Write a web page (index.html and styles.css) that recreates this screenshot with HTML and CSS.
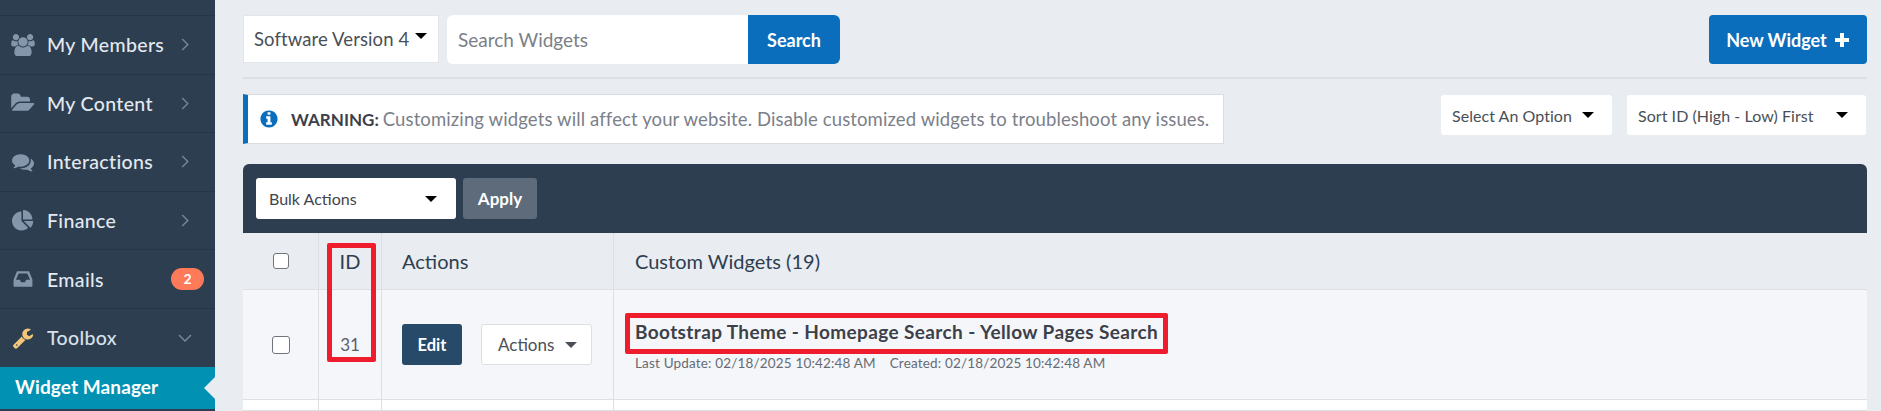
FILE: index.html
```html
<!DOCTYPE html>
<html lang="en">
<head>
<meta charset="utf-8">
<title>Widget Manager</title>
<link rel="stylesheet" href="styles.css">
</head>
<body>
<div class="app">
  <aside class="sidebar">
    <div class="side-top"></div>
    <a class="nav"><svg class="ico" viewBox="0 0 1920 1792"><path d="M593 896q-162 5-265 128h-134q-82 0-138-40.500t-56-118.500q0-353 124-353 6 0 43.500 21t97.500 42.500 119 21.500q67 0 133-23-5 37-5 66 0 139 81 256zm1071 637q0 120-73 189.500t-194 69.500h-874q-121 0-194-69.500t-73-189.500q0-53 3.500-103.500t14-109 26.500-108.500 43-97.500 62-81 85.500-53.500 111.500-20q10 0 43 21.500t73 48 107 48 135 21.500 135-21.500 107-48 73-48 43-21.500q61 0 111.500 20t85.500 53.500 62 81 43 97.500 26.500 108.500 14 109 3.500 103.500zm-1024-1277q0 106-75 181t-181 75-181-75-75-181 75-181 181-75 181 75 75 181zm704 384q0 159-112.500 271.500t-271.500 112.500-271.500-112.500-112.500-271.500 112.500-271.500 271.500-112.500 271.500 112.500 112.500 271.500zm576 225q0 78-56 118.500t-138 40.500h-134q-103-123-265-128 81-117 81-256 0-29-5-66 66 23 133 23 59 0 119-21.500t97.500-42.500 43.500-21q124 0 124 353zm-128-609q0 106-75 181t-181 75-181-75-75-181 75-181 181-75 181 75 75 181z"/></svg><span class="label">My Members</span><svg class="chev" viewBox="0 0 8 14"><path d="M1 1l6 6-6 6"/></svg></a>
    <a class="nav"><svg class="ico" viewBox="0 0 1920 1792"><path d="M1879 952q0 31-31 66l-336 396q-43 51-120.500 86.500t-143.500 35.500h-1088q-34 0-60.500-13t-26.500-43q0-31 31-66l336-396q43-51 120.500-86.500t143.500-35.500h1088q34 0 60.500 13t26.500 43zm-343-344v160h-832q-94 0-197 47.500t-164 119.500l-337 396-5 6q0-4-.5-12.500t-.5-12.500v-960q0-92 66-158t158-66h320q92 0 158 66t66 158v32h544q92 0 158 66t66 158z"/></svg><span class="label">My Content</span><svg class="chev" viewBox="0 0 8 14"><path d="M1 1l6 6-6 6"/></svg></a>
    <a class="nav"><svg class="ico" viewBox="0 0 1792 1792"><path d="M1408 768q0 139-94 257t-256.500 186.500-353.500 68.500q-86 0-176-16-124 88-278 128-36 9-86 16h-3q-11 0-20.500-8t-11.500-21q-1-3-1-6.500t.5-6.500 2-6l2.500-5 3.500-5.500 4-5 4.500-5 4-4.500q5-6 23-25t26-29.500 22.500-29 25-38.500 20.500-44q-124-72-195-177t-71-224q0-139 94-257t256.500-186.500 353.500-68.500 353.500 68.500 256.500 186.500 94 257zm384 256q0 120-71 224.500t-195 176.500q10 24 20.500 44t25 38.500 22.500 29 26 29.500 23 25q1 1 4 4.500t4.500 5 4 5 3.500 5.500l2.500 5 2 6 .5 6.500-1 6.500q-3 14-13 22t-22 7q-50-7-86-16-154-40-278-128-90 16-176 16-271 0-472-132 58 4 88 4 161 0 309-45t264-129q125-92 192-212t67-254q0-77-23-152 129 71 204 178t75 230z"/></svg><span class="label">Interactions</span><svg class="chev" viewBox="0 0 8 14"><path d="M1 1l6 6-6 6"/></svg></a>
    <a class="nav"><svg class="ico" viewBox="0 0 1792 1792"><path d="M768 890l546 546q-106 108-247.500 168t-298.500 60q-209 0-385.500-103t-279.500-279.500-103-385.500 103-385.500 279.500-279.500 385.500-103v762zm187 6h773q0 157-60 298.500t-168 247.500zm709-128h-768v-768q209 0 385.500 103t279.500 279.500 103 385.500z"/></svg><span class="label">Finance</span><svg class="chev" viewBox="0 0 8 14"><path d="M1 1l6 6-6 6"/></svg></a>
    <a class="nav"><svg class="ico" viewBox="0 0 1536 1792"><path d="M1023 960h316q-1-3-2.500-8.500t-2.500-7.500l-212-496h-708l-212 496q-1 3-2.500 8.500t-2.500 7.500h316l95 192h320zm513 30v482q0 26-19 45t-45 19h-1408q-26 0-45-19t-19-45v-482q0-62 25-123l238-552q10-25 36.500-42t52.500-17h832q26 0 52.500 17t36.500 42l238 552q25 61 25 123z"/></svg><span class="label">Emails</span><span class="badge">2</span></a>
    <a class="nav nav-open"><svg class="ico ico-wrench" viewBox="0 0 1792 1792"><path d="M448 1472q0-26-19-45t-45-19-45 19-19 45 19 45 45 19 45-19 19-45zm644-420l-682 682q-37 37-90 37-52 0-91-37l-106-108q-38-36-38-90 0-53 38-91l681-681q39 98 114.500 173.500t173.500 114.500zm634-435q0 39-23 106-47 134-164.500 217.500t-258.500 83.500q-185 0-316.500-131.500t-131.500-316.500 131.500-316.500 316.500-131.500q58 0 121.500 16.500t107.500 46.500q16 11 16 28t-16 28l-293 169v224l193 107q5-3 79-48.500t135.500-81 70.500-35.500q15 0 23.500 10t8.500 25z"/></svg><span class="label">Toolbox</span><svg class="chev chev-down" viewBox="0 0 14 8"><path d="M1 1l6 6 6-6"/></svg></a>
    <a class="nav-active">Widget Manager</a>
  </aside>

  <main class="main">
    <div class="top-row">
      <div class="version">Software Version 4<i class="caret caret-up"></i></div>
      <div class="search">
        <div class="search-input">Search Widgets</div>
        <button class="btn-blue btn-search">Search</button>
      </div>
      <button class="btn-blue btn-new">New Widget<svg class="plus" viewBox="0 0 16 16"><path d="M6 1h4v5h5v4h-5v5H6v-5H1V6h5z"/></svg></button>
    </div>
    <div class="notice-row">
      <div class="notice">
        <svg class="info" viewBox="0 0 1536 1792"><path d="M1024 1376v-160q0-14-9-23t-23-9h-96v-512q0-14-9-23t-23-9h-320q-14 0-23 9t-9 23v160q0 14 9 23t23 9h96v320h-96q-14 0-23 9t-9 23v160q0 14 9 23t23 9h448q14 0 23-9t9-23zm-128-896v-160q0-14-9-23t-23-9h-192q-14 0-23 9t-9 23v160q0 14 9 23t23 9h192q14 0 23-9t9-23zm640 416q0 209-103 385.500t-279.500 279.500-385.500 103-385.500-103-279.500-279.500-103-385.500 103-385.500 279.500-279.500 385.500-103 385.500 103 279.500 279.500 103 385.500z"/></svg>
        <b>WARNING:</b><span>Customizing widgets will affect your website. Disable customized widgets to troubleshoot any issues.</span>
      </div>
      <div class="pick pick-a">Select An Option<i class="caret"></i></div>
      <div class="pick pick-b">Sort ID (High - Low) First<i class="caret"></i></div>
    </div>

    <section class="panel">
      <div class="panel-bar">
        <div class="bulk">Bulk Actions<i class="caret"></i></div>
        <button class="apply">Apply</button>
      </div>
      <div class="grid grid-head">
        <div class="cell cell-c"><i class="check"></i></div>
        <div class="cell cell-c">ID</div>
        <div class="cell cell-a">Actions</div>
        <div class="cell cell-t">Custom Widgets (19)</div>
      </div>
      <div class="grid grid-row">
        <div class="cell cell-c"><i class="check check-lg"></i></div>
        <div class="cell cell-c cell-id">31</div>
        <div class="cell cell-a">
          <button class="edit">Edit</button>
          <div class="row-actions">Actions<i class="caret caret-grey"></i></div>
        </div>
        <div class="cell cell-t cell-stack">
          <div class="title">Bootstrap Theme - Homepage Search - Yellow Pages Search</div>
          <div class="meta"><span>Last Update: 02/18/2025 10:42:48 AM</span><span>Created: 02/18/2025 10:42:48 AM</span></div>
        </div>
      </div>
      <div class="grid grid-next">
        <div class="cell"></div><div class="cell"></div><div class="cell"></div><div class="cell"></div>
      </div>
    </section>

    <div class="mark mark-id"></div>
    <div class="mark mark-title"></div>
  </main>
</div>
</body>
</html>
```
FILE: styles.css
```css
* { box-sizing: border-box; }
html, body { margin: 0; height: 411px; overflow: hidden; }
body { font-family: "Lato", "Open Sans", sans-serif; color: #3c4450; background: #e9ecf1; }
.app { display: flex; height: 411px; }

.sidebar { width: 215px; flex: none; background: #2d3e50; overflow: hidden; }
.side-top { height: 16px; border-bottom: 1px solid #26354a; }
.nav { display: flex; align-items: center; height: 58.600px; padding: 0 26px 0 11px; border-bottom: 1px solid #26354a; color: #e3e9f0; font-size: 19.500px; font-weight: 500; letter-spacing: .35px; }
.nav-open { border-bottom: 0; height: 58px; color: #d7e0ea; }
.ico { width: 24px; height: 22px; fill: #8496a9; flex: none; }
.ico-wrench { fill: #f3c777; }
.label { margin-left: 12px; flex: 1; }
.chev { width: 8px; height: 13px; fill: none; stroke: #75879c; stroke-width: 1.5; }
.chev-down { width: 14px; height: 8px; margin-right: -3px; }
.badge { width: 33px; height: 22px; margin-right: -15px; border-radius: 11px; background: #ff7a59; color: #fff; font-size: 14px; font-weight: 700; text-align: center; line-height: 22px; letter-spacing: 0; }
.nav-active { position: relative; display: block; height: 42px; padding-left: 15px; background: #0091b3; color: #fff; font-size: 19px; font-weight: 700; line-height: 40px; letter-spacing: .1px; }
.nav-active::after { content: ""; position: absolute; right: 0; top: 10px; border: 11px solid transparent; border-left: 0; border-right-color: #e9ecf1; }

.main { position: relative; flex: 1; padding: 15px 14px 0 28px; min-width: 0; }
.top-row { display: flex; align-items: stretch; height: 64px; padding-bottom: 15px; border-bottom: 2px solid #dcdfe3; }
.version { display: flex; align-items: center; width: 196px; height: 48px; padding-left: 10px; background: #fff; border: 1px solid #e2e5ea; font-size: 18.500px; letter-spacing: .1px; color: #4a4f57; }
.caret { display: inline-block; width: 0; height: 0; border: 6px solid transparent; border-top-color: #000; border-bottom: 0; }
.caret-up { margin: 0 0 6px 6px; }
.search { display: flex; margin-left: 8px; height: 49px; }
.search-input { display: flex; align-items: center; width: 301px; padding-left: 11px; background: #fff; border-radius: 6px 0 0 6px; font-size: 19px; color: #7a7f87; }
.btn-blue { background: #0a6ebd; color: #fff; border: 0; font-family: inherit; font-size: 18px; font-weight: 700; }
.btn-search { width: 92px; border-radius: 0 6px 6px 0; }
.btn-new { display: flex; align-items: center; justify-content: center; gap: 7px; width: 158px; height: 49px; margin-left: auto; border-radius: 4px; }
.plus { width: 16px; height: 16px; fill: #fff; }

.notice-row { display: flex; align-items: flex-start; margin-top: 15px; height: 70px; }
.notice { display: flex; align-items: center; width: 981px; height: 50px; margin-right: auto; padding-left: 12px; background: #fff; border: 1px solid #d9dce1; border-left: 5px solid #0a6ebd; font-size: 18.500px; letter-spacing: .12px; color: #7b8089; white-space: nowrap; }
.notice b { margin: 0 4px 0 13px; color: #3c3f4a; font-size: 17px; font-weight: 700; letter-spacing: 0; }
.info { width: 18px; height: 20px; fill: #0a6ebd; flex: none; }
.pick { display: flex; align-items: center; justify-content: space-between; height: 40px; margin-top: 1px; padding: 0 18px 0 11px; background: #fff; border-radius: 3px; font-size: 16px; letter-spacing: .05px; color: #4a4f57; }
.pick-a { width: 171px; }
.pick-b { width: 239px; margin-left: 15px; margin-right: 1px; }

.panel { background: #f4f6fa; border-radius: 6px 6px 0 0; overflow: hidden; }
.panel-bar { display: flex; gap: 7px; height: 69px; padding: 14px 13px; background: #2d3e50; }
.bulk { display: flex; align-items: center; justify-content: space-between; width: 200px; height: 41px; padding: 0 19px 0 13px; background: #fff; border-radius: 3px; font-size: 16px; color: #3f444c; }
.apply { width: 74px; height: 41px; border: 0; border-radius: 3px; background: #5e6b7a; color: #fff; font-family: inherit; font-size: 17px; font-weight: 700; }

.grid { display: grid; grid-template-columns: 76px 63px 232px 1fr; }
.cell { display: flex; align-items: center; border-right: 1px solid #dcdfe3; border-bottom: 1px solid #dcdfe3; }
.cell:last-child { border-right: 0; }
.cell-c { justify-content: center; }
.cell-a { padding-left: 20px; }
.cell-t { padding-left: 21px; }
.grid-head { height: 57px; background: #e9ecf1; font-size: 20px; color: #2d3e50; }
.grid-row { height: 110px; background: #f4f6fa; }
.grid-next { height: 11px; background: #fff; }
.check { display: block; width: 16px; height: 16px; background: #fff; border: 1.500px solid #6f757c; border-radius: 3px; }
.check-lg { width: 18px; height: 18px; }
.cell-id { font-size: 17px; color: #5a6068; letter-spacing: 0; }
.edit { width: 60px; height: 41px; border: 0; border-radius: 3px; background: #264a68; color: #fff; font-family: inherit; font-size: 16.500px; font-weight: 700; }
.row-actions { display: flex; align-items: center; justify-content: space-between; width: 111px; height: 41px; margin-left: 19px; padding: 0 14px 0 16px; background: #fff; border: 1px solid #dcdfe3; border-radius: 3px; font-size: 17px; color: #4a4f57; }
.caret-grey { border-top-color: #4a4f57; }
.cell-stack { flex-direction: column; align-items: flex-start; justify-content: flex-start; padding-top: 30px; }
.title { font-size: 19px; font-weight: 700; letter-spacing: .38px; color: #3c4049; white-space: nowrap; }
.meta { display: flex; gap: 14px; margin-top: 12px; font-size: 13.500px; letter-spacing: .17px; color: #666b73; }

.mark { position: absolute; border: 5px solid #ee1c2d; border-radius: 2px; }
.mark-id { left: 112px; top: 243px; width: 49px; height: 119px; }
.mark-title { left: 410px; top: 313px; width: 543px; height: 41px; }
```
